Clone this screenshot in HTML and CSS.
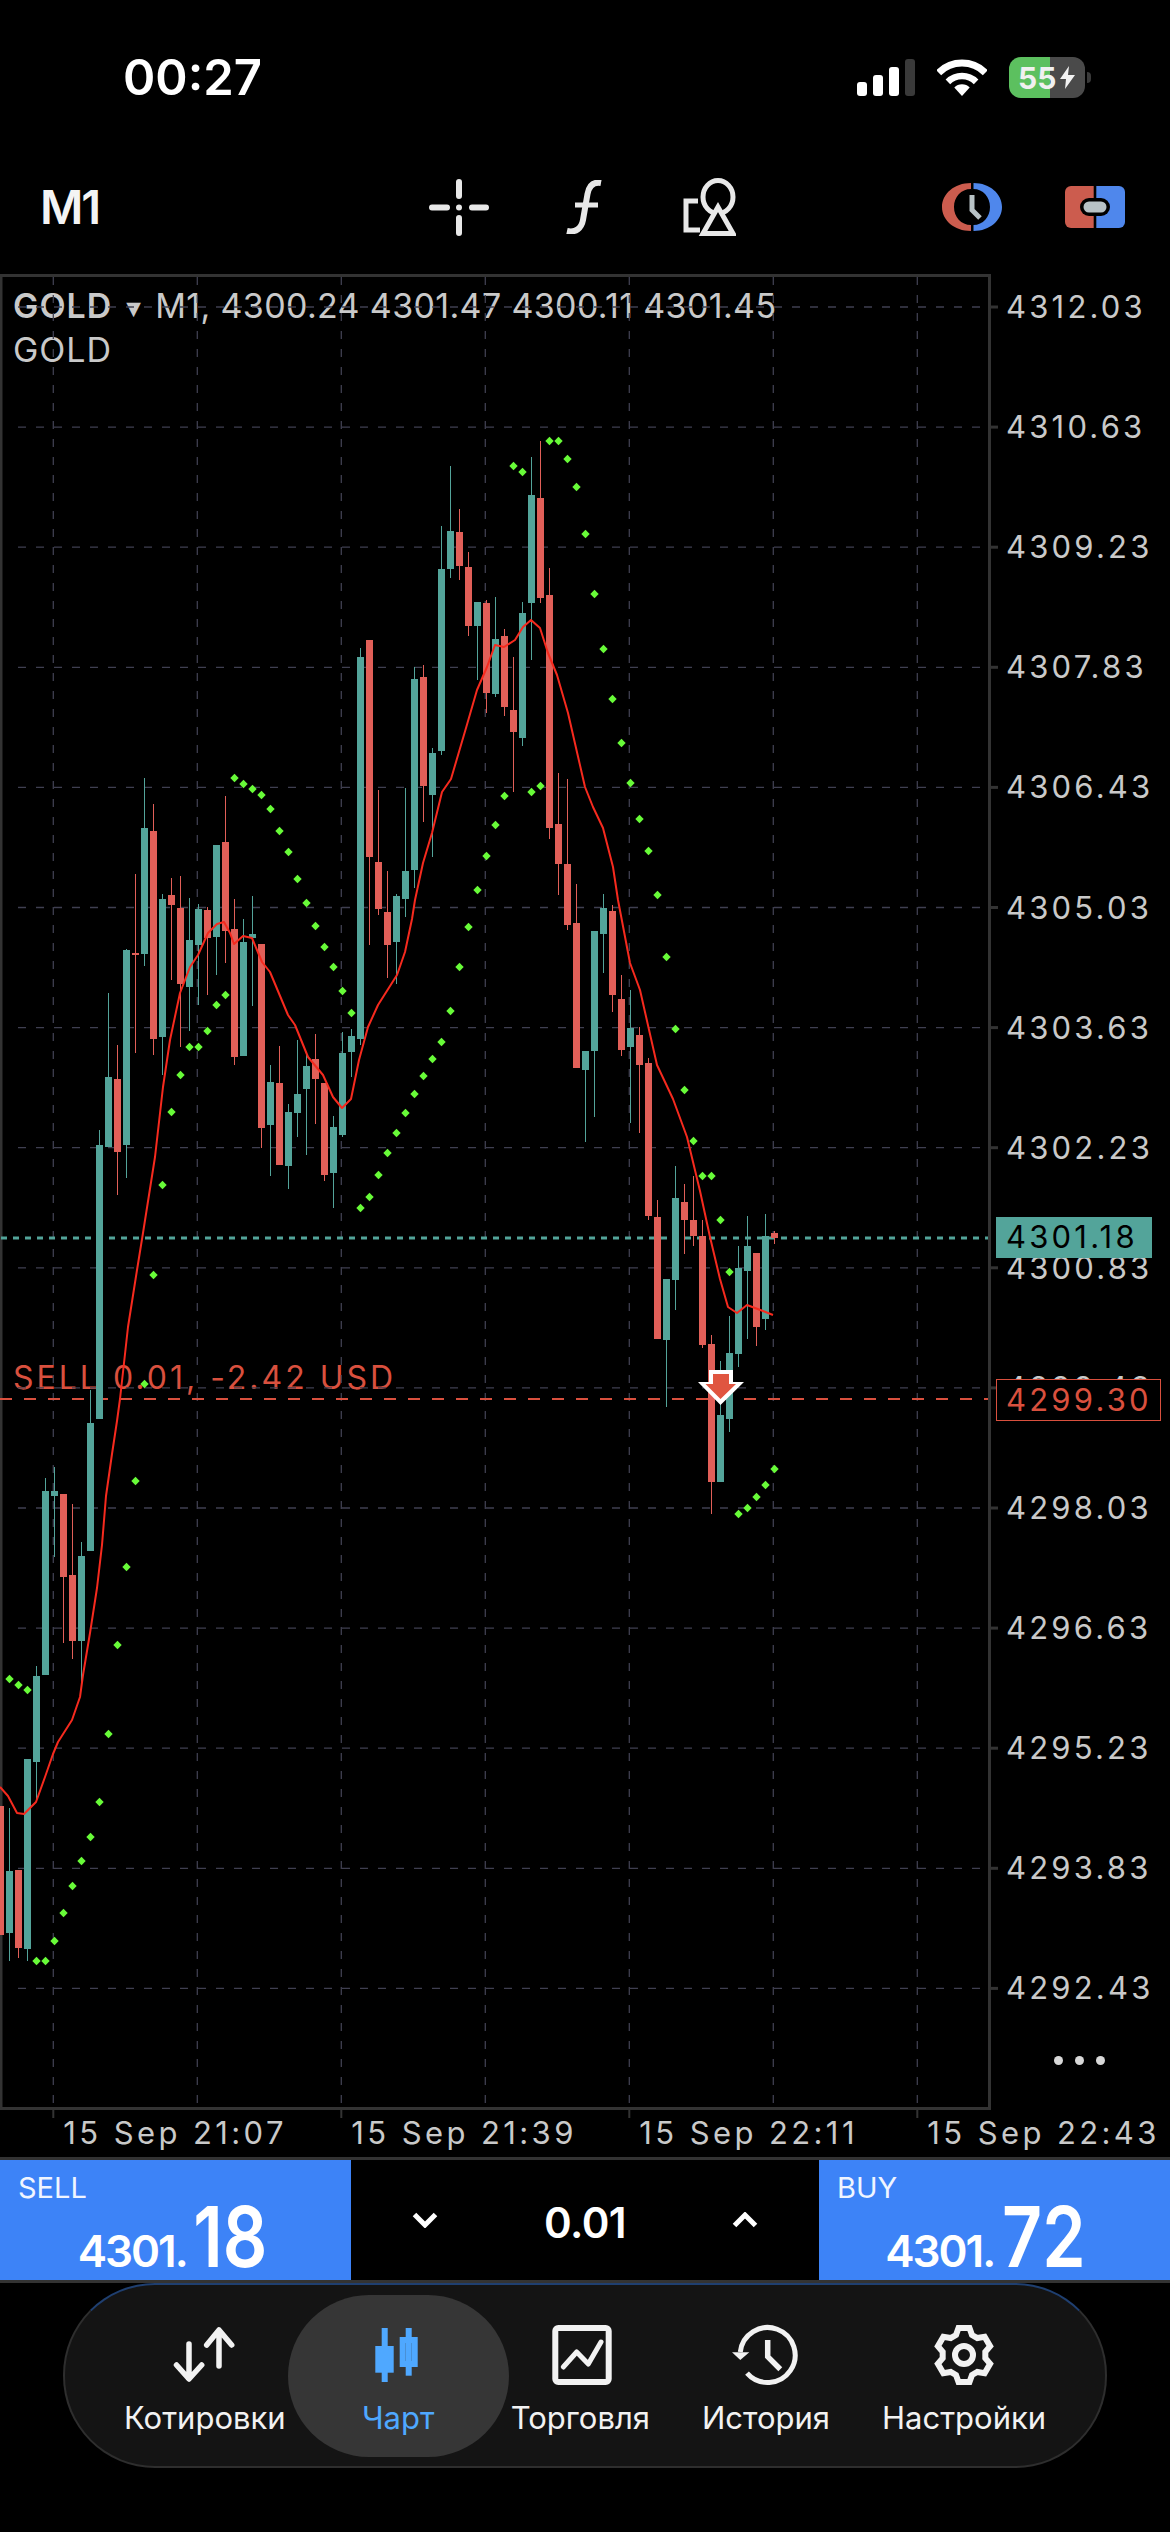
FILE: index.html
```html
<!DOCTYPE html>
<html lang="en">
<head>
    <meta charset="UTF-8">
    <meta name="viewport" content="width=device-width, initial-scale=1.0">
    <title>GOLD M1 chart</title>
    <link rel="stylesheet" href="styles.css">
</head>
<body>
    <div class="status-bar">
        <div class="clock">00:27</div>
        <div class="status-icons">
            <svg class="signal" viewBox="0 0 58 37">
                <rect x="0" y="23" width="10" height="14" rx="3"/>
                <rect x="16" y="16" width="10" height="21" rx="3"/>
                <rect x="32" y="8" width="10" height="29" rx="3"/>
                <rect class="signal-off" x="48" y="0" width="10" height="37" rx="3"/>
            </svg>
            <svg class="wifi" viewBox="0 0 50 37">
                <path d="M1.7 13.7a33 33 0 0 1 46.6 0" fill="none" stroke="#fff" stroke-width="7"/>
                <path d="M10.9 22.9a20 20 0 0 1 28.2 0" fill="none" stroke="#fff" stroke-width="6.5"/>
                <path d="M25 37l-7.7-8.5a11 11 0 0 1 15.4 0z" fill="#fff"/>
            </svg>
            <div class="battery">
                <span>55</span>
                <svg class="bolt" viewBox="0 0 15 23"><path d="M9 0L0 13h6l-1 10L15 9H8z" fill="#f2f2f2"/></svg>
            </div>
        </div>
    </div>

    <div class="toolbar">
        <div class="timeframe">M1</div>
        <svg class="ico-cross" viewBox="0 0 60 60">
            <path d="M30 5V19M30 41V56M3 30.500H18M43 30.500H57" stroke="#e8e8e8" stroke-width="6" stroke-linecap="round"/>
            <circle cx="30" cy="30.500" r="3" fill="#e8e8e8"/>
        </svg>
        <svg class="ico-func" viewBox="0 0 38 54">
            <path d="M36 3C28 1.500 24 6 22.500 14L18 40C16.500 48 11 53 2 51" fill="none" stroke="#e8e8e8" stroke-width="6"/>
            <path d="M10 25H33" stroke="#e8e8e8" stroke-width="5"/>
        </svg>
        <svg class="ico-obj" viewBox="0 0 53 58" fill="none" stroke="#e8e8e8" stroke-width="5">
            <path d="M15 23H3V52H17"/>
            <ellipse cx="35" cy="19" rx="15" ry="16.500"/>
            <path d="M35 29L20 55.500H50Z" fill="#000"/>
        </svg>
        <svg class="ico-clock" viewBox="0 0 60 48">
            <path d="M29 0C12 0 0 11 0 24s12 24 29 24v-6C19 42 12 34 12 24S19 6 29 6z" fill="#cc5c4e"/>
            <path d="M31.500 0C48 0 60 11 60 24s-12 24-28.500 24v-6C41 42 48 34 48 24S41 6 31.500 6z" fill="#4f87ec"/>
            <path d="M30 12V27L38 35" fill="none" stroke="#b8c2c6" stroke-width="5"/>
        </svg>
        <svg class="ico-book" viewBox="0 0 60 42">
            <path d="M28.700 0V42H6a6 6 0 0 1-6-6V6a6 6 0 0 1 6-6z" fill="#cc5c4e"/>
            <path d="M31.300 0V42H54a6 6 0 0 0 6-6V6a6 6 0 0 0-6-6z" fill="#4f87ec"/>
            <rect x="15" y="12" width="30" height="18" rx="9" fill="#000"/>
            <rect x="18.500" y="15.500" width="23" height="11" rx="5.500" fill="#b8c2c6"/>
        </svg>
    </div>

    <div class="chart" id="chart">
        <div class="chart-title"><b>GOLD</b> <i class="caret">▼</i> M1, 4300.24 4301.47 4300.11 4301.45</div>
        <div class="chart-subtitle">GOLD</div>
        <div class="order-text">SELL 0.01, -2.42 USD</div>
        <svg class="chart-svg" id="chartSvg" viewBox="0 273 1170 1884"></svg>
        <div class="tag tag-bid">4301.18</div>
        <div class="tag tag-order">4299.30</div>
        <div class="more"><span></span><span></span><span></span></div>
    </div>

    <div class="trade">
        <div class="side">
            <div class="side-label">SELL</div>
            <div class="side-price"><span class="price-small">4301.</span><span class="price-big">18</span></div>
        </div>
        <div class="volume">
            <svg class="chevron" viewBox="0 0 26 16"><path d="M2.500 2.500L13 13 23.500 2.500" fill="none" stroke="#fff" stroke-width="5"/></svg>
            <div class="volume-value">0.01</div>
            <svg class="chevron" viewBox="0 0 26 16"><path d="M2.500 13.500L13 3 23.500 13.500" fill="none" stroke="#fff" stroke-width="5"/></svg>
        </div>
        <div class="side">
            <div class="side-label">BUY</div>
            <div class="side-price"><span class="price-small">4301.</span><span class="price-big">72</span></div>
        </div>
    </div>

    <div class="nav">
        <div class="nav-item">
            <svg viewBox="0 0 60 60" fill="none" stroke="#f2f2f2" stroke-width="5.500" stroke-linecap="round" stroke-linejoin="round">
                <path d="M44 6V41M31.700 20L44 5 56.700 20"/>
                <path d="M14 19V53M1.500 40L14 54 26.700 40"/>
            </svg>
            <span>Котировки</span>
        </div>
        <div class="nav-item nav-active">
            <svg viewBox="0 0 60 60" fill="#4fa8ff">
                <rect x="13.700" y="3" width="6" height="54"/>
                <rect x="7.300" y="21" width="18.400" height="26.700"/>
                <rect x="37.700" y="3" width="6" height="47.700"/>
                <path d="M31.700 12H49.700V42H31.700zM37.700 18V36H43.700V18z" fill-rule="evenodd"/>
            </svg>
            <span>Чарт</span>
        </div>
        <div class="nav-item">
            <svg viewBox="0 0 60 60" fill="none" stroke="#f2f2f2">
                <rect x="5.300" y="3" width="53.400" height="54" rx="3" stroke-width="6"/>
                <path d="M13.300 42L26.700 27 38.300 39 51 17" stroke-width="5" stroke-linecap="round" stroke-linejoin="round"/>
            </svg>
            <span>Торговля</span>
        </div>
        <div class="nav-item nav-spaced">
            <svg viewBox="0 0 60 60" fill="none" stroke="#f2f2f2" stroke-width="5">
                <path d="M4.300 27A27.500 27.500 0 1 1 11 48.200"/>
                <path d="M-4 27.300H13.300L4.300 35z" fill="#f2f2f2" stroke="none"/>
                <path d="M31.700 15V31.700L44.300 44.300" stroke-width="5.500"/>
            </svg>
            <span>История</span>
        </div>
        <div class="nav-item nav-spaced">
            <svg viewBox="0 0 60 60" fill="none" stroke="#f2f2f2" stroke-width="6">
                <polygon points="22,10 24.500,3 35.500,3 38,10 43.320,13.070 50.630,11.740 56.130,21.260 51.320,26.930 51.320,33.070 56.130,38.740 50.630,48.260 43.320,46.930 38,50 35.500,57 24.500,57 22,50 16.680,46.930 9.370,48.260 3.870,38.740 8.680,33.070 8.680,26.930 3.870,21.260 9.370,11.740 16.680,13.070"/>
                <circle cx="30" cy="30" r="9"/>
            </svg>
            <span>Настройки</span>
        </div>
    </div>

    <script src="script.js"></script>
</body>
</html>
```

FILE: styles.css
```css
* {
    margin: 0;
    padding: 0;
    box-sizing: border-box;
}

body {
    font-family: 'Inter', 'Liberation Sans', sans-serif;
    background: #000;
    color: #fff;
    width: 1170px;
    height: 2532px;
    overflow: hidden;
}

.status-bar {
    height: 140px;
    display: flex;
    align-items: flex-start;
    padding: 59px 79px 0 123px;
}

.clock {
    font-size: 49px;
    font-weight: 600;
    line-height: 37px;
}

.status-icons {
    margin-left: auto;
    display: flex;
    align-items: flex-start;
    gap: 22px;
}

.signal {
    width: 58px;
    height: 37px;
    fill: #fff;
}

.signal-off {
    fill: #3a3a3a;
}

.wifi {
    width: 50px;
    height: 37px;
}

.battery {
    position: relative;
    width: 76px;
    height: 41px;
    margin: -2px 6px 0 0;
    border-radius: 12px;
    background: linear-gradient(90deg, #5cc05f 54%, #4a4a4a 54%);
    display: flex;
    align-items: center;
    padding-left: 9px;
    gap: 4px;
    font-size: 30px;
    font-weight: 700;
    color: #f0f0f0;
}

.battery::after {
    content: '';
    position: absolute;
    right: -6px;
    top: 15px;
    width: 4px;
    height: 11px;
    border-radius: 0 4px 4px 0;
    background: #3a3a3a;
}

.bolt {
    width: 15px;
    height: 23px;
}

.toolbar {
    height: 133px;
    display: flex;
    align-items: center;
    padding-left: 40px;
}

.timeframe {
    width: 389px;
    font-size: 47px;
    font-weight: 600;
    letter-spacing: -2px;
    color: #f4f4f4;
}

.ico-cross {
    width: 60px;
    height: 60px;
}

.ico-func {
    width: 38px;
    height: 54px;
    margin-left: 76px;
}

.ico-obj {
    width: 53px;
    height: 58px;
    margin-left: 80px;
}

.ico-clock {
    width: 60px;
    height: 48px;
    margin-left: 206px;
}

.ico-book {
    width: 60px;
    height: 42px;
    margin-left: 63px;
}

.chart {
    position: relative;
    height: 1884px;
    overflow: hidden;
}

.chart-svg {
    position: absolute;
    left: 0;
    top: 0;
    width: 1170px;
    height: 1884px;
}

.chart-title,
.chart-subtitle {
    position: absolute;
    left: 13px;
    font-size: 34px;
    line-height: 40px;
    color: #c9c9c9;
    white-space: nowrap;
}

.chart-title {
    top: 13px;
    letter-spacing: 0.35px;
}

.chart-title b {
    font-weight: 600;
    letter-spacing: 1px;
}

.chart-subtitle {
    top: 57px;
    letter-spacing: 1px;
}

.caret {
    display: inline-block;
    margin: 0 4px;
    font-family: 'DejaVu Sans', sans-serif;
    font-style: normal;
    font-size: 19px;
    vertical-align: 3px;
}

.order-text {
    position: absolute;
    left: 13px;
    top: 1085px;
    font-size: 32px;
    line-height: 40px;
    letter-spacing: 3px;
    color: #d9503e;
    white-space: nowrap;
}

.price-label,
.time-label,
.tag {
    position: absolute;
    font-size: 31px;
    letter-spacing: 3.200px;
    line-height: 40px;
    white-space: nowrap;
}

.price-label {
    left: 1006px;
    color: #c9c9c9;
}

.time-label {
    top: 1840px;
    font-size: 31px;
    letter-spacing: 3.400px;
    color: #c9c9c9;
}

.tag {
    left: 996px;
    padding-left: 10px;
}

.tag-bid {
    top: 944px;
    width: 156px;
    height: 41px;
    background: #53a49a;
    color: #000;
}

.tag-order {
    top: 1106px;
    width: 165px;
    height: 42px;
    padding-left: 9px;
    border: 1.500px solid #d9503e;
    background: #000;
    color: #d9503e;
}

.more {
    position: absolute;
    left: 1054px;
    top: 1783px;
    display: flex;
    gap: 12px;
}

.more span {
    width: 9px;
    height: 9px;
    border-radius: 50%;
    background: #d8d8d8;
}

/* chart drawing */
.grid-line {
    stroke: #3f3f50;
    stroke-width: 1.300;
    stroke-dasharray: 8 10;
}

.frame {
    stroke: #333;
    stroke-width: 3;
    fill: none;
}

.tick {
    stroke: #333;
    stroke-width: 3;
}

.tick-time {
    stroke-width: 2;
}

.bid-line {
    stroke: #53a49a;
    stroke-width: 3;
    stroke-dasharray: 6 6;
}

.order-line {
    stroke: #d9503e;
    stroke-width: 2;
    stroke-dasharray: 12 12;
}

.up {
    fill: #53a49a;
}

.down {
    fill: #e15f58;
}

.ma-line {
    fill: none;
    stroke: #f62a1e;
    stroke-width: 2;
    stroke-linejoin: round;
}

.sar-dot {
    fill: #68fb38;
}

.arrow-outer {
    fill: #fff;
}

.arrow-inner {
    fill: #e05540;
}

.trade {
    height: 126px;
    display: flex;
    border-top: 3px solid #333;
    border-bottom: 3px solid #333;
}

.side {
    width: 351px;
    padding: 11px 84px 0 18px;
    background: #3d83f7;
}

.side-label {
    font-size: 29px;
    line-height: 34px;
    color: #f0f5ff;
}

.side-price {
    display: flex;
    justify-content: flex-end;
    align-items: baseline;
    margin-top: -9px;
    line-height: 82px;
    font-weight: 600;
}

.price-small {
    font-size: 44px;
    letter-spacing: -2px;
}

/* the big digits on the phone are condensed */
.price-big {
    display: inline-block;
    font-size: 84px;
    font-weight: 600;
    margin-left: -9px;
    transform: scaleX(0.83);
    transform-origin: right;
}

.volume {
    flex: 1;
    display: flex;
    align-items: center;
    justify-content: space-between;
    padding: 0 61px;
}

.chevron {
    width: 26px;
    height: 16px;
}

.volume-value {
    padding-top: 4px;
    font-size: 42px;
    font-weight: 600;
    letter-spacing: -0.5px;
}

.nav {
    margin: 0 63px;
    height: 185px;
    display: flex;
    padding-left: 59px;
    gap: 2px;
    border: 2px solid #2e2e2e;
    border-top-color: #1f3f70;
    border-radius: 92px;
    background: #141414;
}

.nav-item {
    display: flex;
    flex-direction: column;
    align-items: center;
    padding-top: 40px;
    font-size: 31px;
    color: #f2f2f2;
    white-space: nowrap;
}

.nav-item svg {
    width: 60px;
    height: 60px;
    overflow: visible;
    margin-bottom: 14px;
}

.nav-active {
    width: 221px;
    height: 162px;
    margin-top: 10px;
    padding-top: 30px;
    border-radius: 81px;
    background: #363636;
    color: #4fa8ff;
}

.nav-spaced {
    margin-left: 50px;
}
```

FILE: script.js
```js
// y values below are page pixels read off the chart, one candle every 9px
// [dir, wickTop, bodyTop, bodyBottom, wickBottom]
const candles = [
    ['down', 1806, 1806, 1935, 1935], ['up', 1808, 1871, 1933, 1961], ['down', 1870, 1870, 1948, 1958],
    ['up', 1759, 1759, 1949, 1961], ['up', 1666, 1676, 1762, 1802], ['up', 1478, 1491, 1675, 1675],
    ['up', 1467, 1491, 1496, 1557], ['down', 1494, 1494, 1577, 1643], ['down', 1504, 1575, 1641, 1659],
    ['up', 1542, 1556, 1641, 1685], ['up', 1390, 1423, 1551, 1551], ['up', 1130, 1145, 1419, 1419],
    ['up', 993, 1077, 1147, 1147], ['down', 1045, 1079, 1152, 1195], ['up', 949, 950, 1145, 1178],
    ['down', 874, 953, 955, 1053], ['up', 778, 828, 954, 966], ['down', 804, 831, 1039, 1055],
    ['up', 894, 899, 1037, 1075], ['down', 878, 895, 905, 980], ['down', 876, 908, 984, 1047],
    ['up', 898, 940, 987, 1031], ['up', 904, 909, 945, 1005], ['down', 907, 910, 938, 995],
    ['up', 845, 845, 937, 975], ['down', 796, 842, 931, 963], ['down', 899, 929, 1057, 1065],
    ['up', 919, 942, 1056, 1056], ['up', 896, 934, 938, 1006], ['down', 944, 944, 1128, 1148],
    ['up', 1065, 1082, 1125, 1176], ['down', 1046, 1083, 1165, 1165], ['up', 1104, 1112, 1166, 1189],
    ['up', 1040, 1094, 1113, 1137], ['up', 1055, 1066, 1089, 1155], ['down', 1034, 1059, 1079, 1124],
    ['down', 1083, 1083, 1175, 1181], ['up', 1116, 1127, 1173, 1208], ['up', 1032, 1053, 1135, 1137],
    ['up', 1029, 1036, 1052, 1077], ['up', 648, 657, 1039, 1045], ['down', 640, 640, 857, 945],
    ['down', 790, 862, 909, 915], ['down', 871, 912, 945, 978], ['up', 894, 896, 942, 984],
    ['up', 788, 871, 899, 917], ['up', 667, 679, 870, 888], ['down', 665, 677, 786, 822],
    ['up', 748, 753, 795, 857], ['up', 526, 569, 751, 755], ['up', 466, 531, 569, 578],
    ['down', 509, 532, 566, 580], ['down', 552, 567, 626, 636], ['up', 602, 602, 626, 680],
    ['down', 600, 603, 693, 713], ['up', 597, 639, 694, 697], ['down', 629, 636, 707, 716],
    ['down', 657, 710, 732, 792], ['up', 602, 613, 738, 746], ['up', 457, 495, 603, 660],
    ['down', 441, 498, 598, 603], ['down', 568, 595, 828, 839], ['down', 773, 824, 864, 895],
    ['down', 779, 864, 925, 930], ['down', 884, 923, 1068, 1068], ['up', 1051, 1051, 1070, 1142],
    ['up', 931, 931, 1051, 1117], ['up', 894, 908, 934, 973], ['down', 905, 911, 995, 1012],
    ['down', 975, 999, 1050, 1056], ['up', 990, 1028, 1047, 1123], ['down', 1027, 1035, 1065, 1133],
    ['down', 1058, 1063, 1216, 1220], ['down', 1200, 1217, 1339, 1339], ['up', 1279, 1279, 1340, 1407],
    ['up', 1166, 1198, 1280, 1310], ['down', 1184, 1202, 1220, 1254], ['down', 1176, 1220, 1236, 1246],
    ['down', 1220, 1236, 1345, 1348], ['down', 1335, 1344, 1482, 1514], ['up', 1361, 1415, 1482, 1482],
    ['up', 1316, 1353, 1419, 1432], ['up', 1246, 1268, 1354, 1367], ['up', 1216, 1246, 1271, 1339],
    ['down', 1253, 1253, 1327, 1346], ['up', 1214, 1236, 1319, 1330], ['down', 1231, 1233, 1238, 1244]
];

// parabolic SAR, first value sits on candle 1
const sar = [
    1679, 1685, 1690, 1961, 1961, 1941, 1913, 1886, 1861, 1837, 1802, 1734, 1645, 1567, 1481,
    1384, 1275, 1185, 1112, 1075, 1047, 1047, 1031, 1005, 995, 778, 784, 789, 795, 809,
    831, 852, 879, 903, 926, 947, 967, 991, 1013, 1208, 1197, 1175, 1153, 1133, 1113,
    1094, 1076, 1059, 1042, 1011, 967, 927, 890, 856, 825, 796, 466, 472, 792, 786,
    441, 441, 459, 487, 534, 594, 649, 699, 743, 783, 819, 851, 895, 957, 1029,
    1090, 1141, 1176, 1176, 1220, 1272, 1514, 1508, 1497, 1485, 1469
];

const maLine = [
    [0, 1787], [8, 1796], [17, 1813], [24, 1814], [36, 1802], [45, 1777], [53, 1754], [58, 1742],
    [72, 1720], [80, 1697], [83, 1675], [90, 1633], [97, 1588], [102, 1545], [106, 1496], [112, 1454],
    [117, 1421], [120, 1399], [128, 1327], [137, 1270], [143, 1233], [155, 1157], [163, 1087], [170, 1040],
    [180, 993], [190, 967], [198, 955], [208, 933], [217, 924], [224, 922], [230, 933], [234, 944],
    [243, 936], [252, 938], [262, 962], [270, 972], [288, 1015], [295, 1025], [308, 1057], [323, 1075],
    [333, 1097], [342, 1108], [351, 1099], [359, 1060], [368, 1027], [378, 1005], [397, 975], [405, 952],
    [412, 919], [415, 900], [423, 863], [432, 833], [442, 792], [451, 779], [466, 728], [477, 690],
    [487, 667], [495, 645], [504, 647], [515, 640], [523, 627], [531, 620], [540, 628], [548, 653],
    [557, 675], [568, 713], [585, 787], [593, 807], [603, 828], [613, 867], [618, 900], [630, 963],
    [640, 990], [657, 1065], [673, 1099], [687, 1137], [700, 1191], [710, 1237], [720, 1279], [728, 1307],
    [737, 1313], [747, 1305], [763, 1311], [773, 1315]
];

const prices = ['4312.03', '4310.63', '4309.23', '4307.83', '4306.43', '4305.03', '4303.63', '4302.23',
    '4300.83', '4299.43', '4298.03', '4296.63', '4295.23', '4293.83', '4292.43'];
const times = ['15 Sep 21:07', '15 Sep 21:39', '15 Sep 22:11', '15 Sep 22:43'];

const TOP = 273;
const chart = document.getElementById('chart');
let svg = '';

// grid and axis ticks
prices.forEach((p, n) => {
    const y = 307 + n * 120.1;
    svg += `<line class="grid-line" x1="18" x2="988" y1="${y}" y2="${y}"/>`;
    svg += `<line class="tick" x1="990" x2="998" y1="${y}" y2="${y}"/>`;
    addLabel('price-label', p, 'top', y - TOP - 20);
});
for (let n = 0; n < 7; n++) {
    const x = 53.3 + n * 144;
    svg += `<line class="grid-line" x1="${x}" x2="${x}" y1="277" y2="2106"/>`;
    if (n % 2 === 0) {
        svg += `<line class="tick tick-time" x1="${x}" x2="${x}" y1="2110" y2="2118"/>`;
        addLabel('time-label', times[n / 2], 'left', x + 10);
    }
}
svg += '<path class="frame" d="M1 275.500H989.500V2108.500H1Z"/>';

// price lines stay behind the candles
svg += '<line class="bid-line" x1="1" x2="988" y1="1238" y2="1238"/>';
svg += '<line class="order-line" x1="0" x2="988" y1="1399" y2="1399"/>';

candles.forEach((c, i) => {
    const x = 9 * i;
    svg += `<rect class="${c[0]}" x="${x}" y="${c[1]}" width="1" height="${c[4] - c[1]}"/>`;
    svg += `<rect class="${c[0]}" x="${x - 3}" y="${c[2]}" width="7" height="${c[3] - c[2]}"/>`;
});

svg += `<polyline class="ma-line" points="${maLine.map(p => p.join(',')).join(' ')}"/>`;

sar.forEach((y, n) => {
    const x = 9 * (n + 1) + 0.5;
    svg += `<path class="sar-dot" d="M${x} ${y - 4.2}l4.200 4.200-4.200 4.200-4.200-4.200z"/>`;
});

// sell marker on the open candle
svg += '<polygon class="arrow-outer" points="709,1370 733,1370 733,1382 744,1382 720.500,1405 698,1382 709,1382"/>';
svg += '<polygon class="arrow-inner" points="713,1374 729,1374 729,1384 736,1384 720.500,1399 705.500,1384 713,1384"/>';

document.getElementById('chartSvg').innerHTML = svg;

function addLabel(cls, text, side, value) {
    const el = document.createElement('div');
    el.className = cls;
    el.textContent = text;
    el.style[side] = value + 'px';
    chart.insertBefore(el, chart.querySelector('.tag'));
}
```
